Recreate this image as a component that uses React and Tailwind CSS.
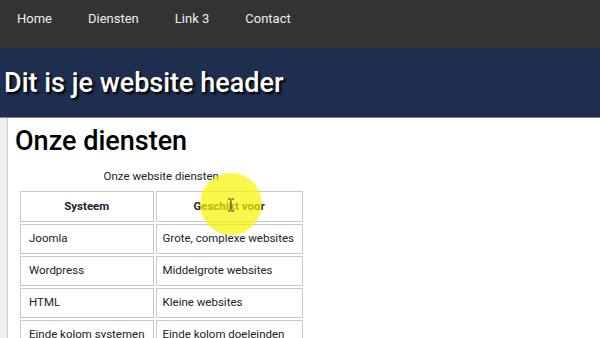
export default function App() {
  const rows = [
    ["Joomla", "Grote, complexe websites"],
    ["Wordpress", "Middelgrote websites"],
    ["HTML", "Kleine websites"],
    ["Einde kolom systemen", "Einde kolom doeleinden"],
  ];
  return (
    <div className="relative w-[600px] h-[338px] overflow-hidden bg-white" style={{ fontFamily: "Roboto, 'Liberation Sans', sans-serif" }}>
      <nav className="h-[48px] bg-[#333333] flex items-start pt-[11px]">
        {["Home", "Diensten", "Link 3", "Contact"].map((t) => (
          <a key={t} className="px-[18px] first:pl-[17px] text-[13px] leading-[16px] text-[#eeeeee]">{t}</a>
        ))}
      </nav>
      <header className="h-[70px] bg-[#1f2d4e] border-b border-[#7a7f88] flex items-center">
        <h1 className="pl-[4px] pt-[2px] text-[27px] font-medium text-white [text-shadow:2px_2px_2px_#000]">Dit is je website header</h1>
      </header>
      <div className="flex h-full">
        <div className="w-[8px] bg-[#f0f0f0] border-r border-[#c8c8c8] shrink-0"></div>
        <main className="pl-[7px] pt-[3px]">
          <h2 className="text-[27px] font-medium text-black leading-[40px]">Onze diensten</h2>
          <table className="ml-[3px] mt-[8px] border-separate border-spacing-[2px] text-[11.5px] text-[#222]">
            <caption className="pb-[6px] leading-[14px]">Onze website diensten</caption>
            <thead>
              <tr>
                <th className="w-[133px] h-[31px] border border-[#c8c8c8] font-bold text-center">Systeem</th>
                <th className="w-[147px] h-[31px] border border-[#c8c8c8] font-bold text-center">Geschikt voor</th>
              </tr>
            </thead>
            <tbody>
              {rows.map(([a, b]) => (
                <tr key={a}>
                  <td className="h-[30px] px-[8px] border border-[#c8c8c8] whitespace-nowrap">{a}</td>
                  <td className="h-[30px] px-[6px] border border-[#c8c8c8] whitespace-nowrap">{b}</td>
                </tr>
              ))}
            </tbody>
          </table>
        </main>
      </div>
      <div className="absolute left-[200px] top-[173px] w-[62px] h-[62px] rounded-full bg-[#f5f500]/70"></div>
      <svg className="absolute left-[227px] top-[198px]" width="8" height="14" viewBox="0 0 8 14">
        <path d="M1 1h2.5M4.5 1H7M4 1.5v11M1 13h2.5M4.5 13H7" stroke="#333" strokeWidth="1" fill="none" />
      </svg>
    </div>
  );
}
